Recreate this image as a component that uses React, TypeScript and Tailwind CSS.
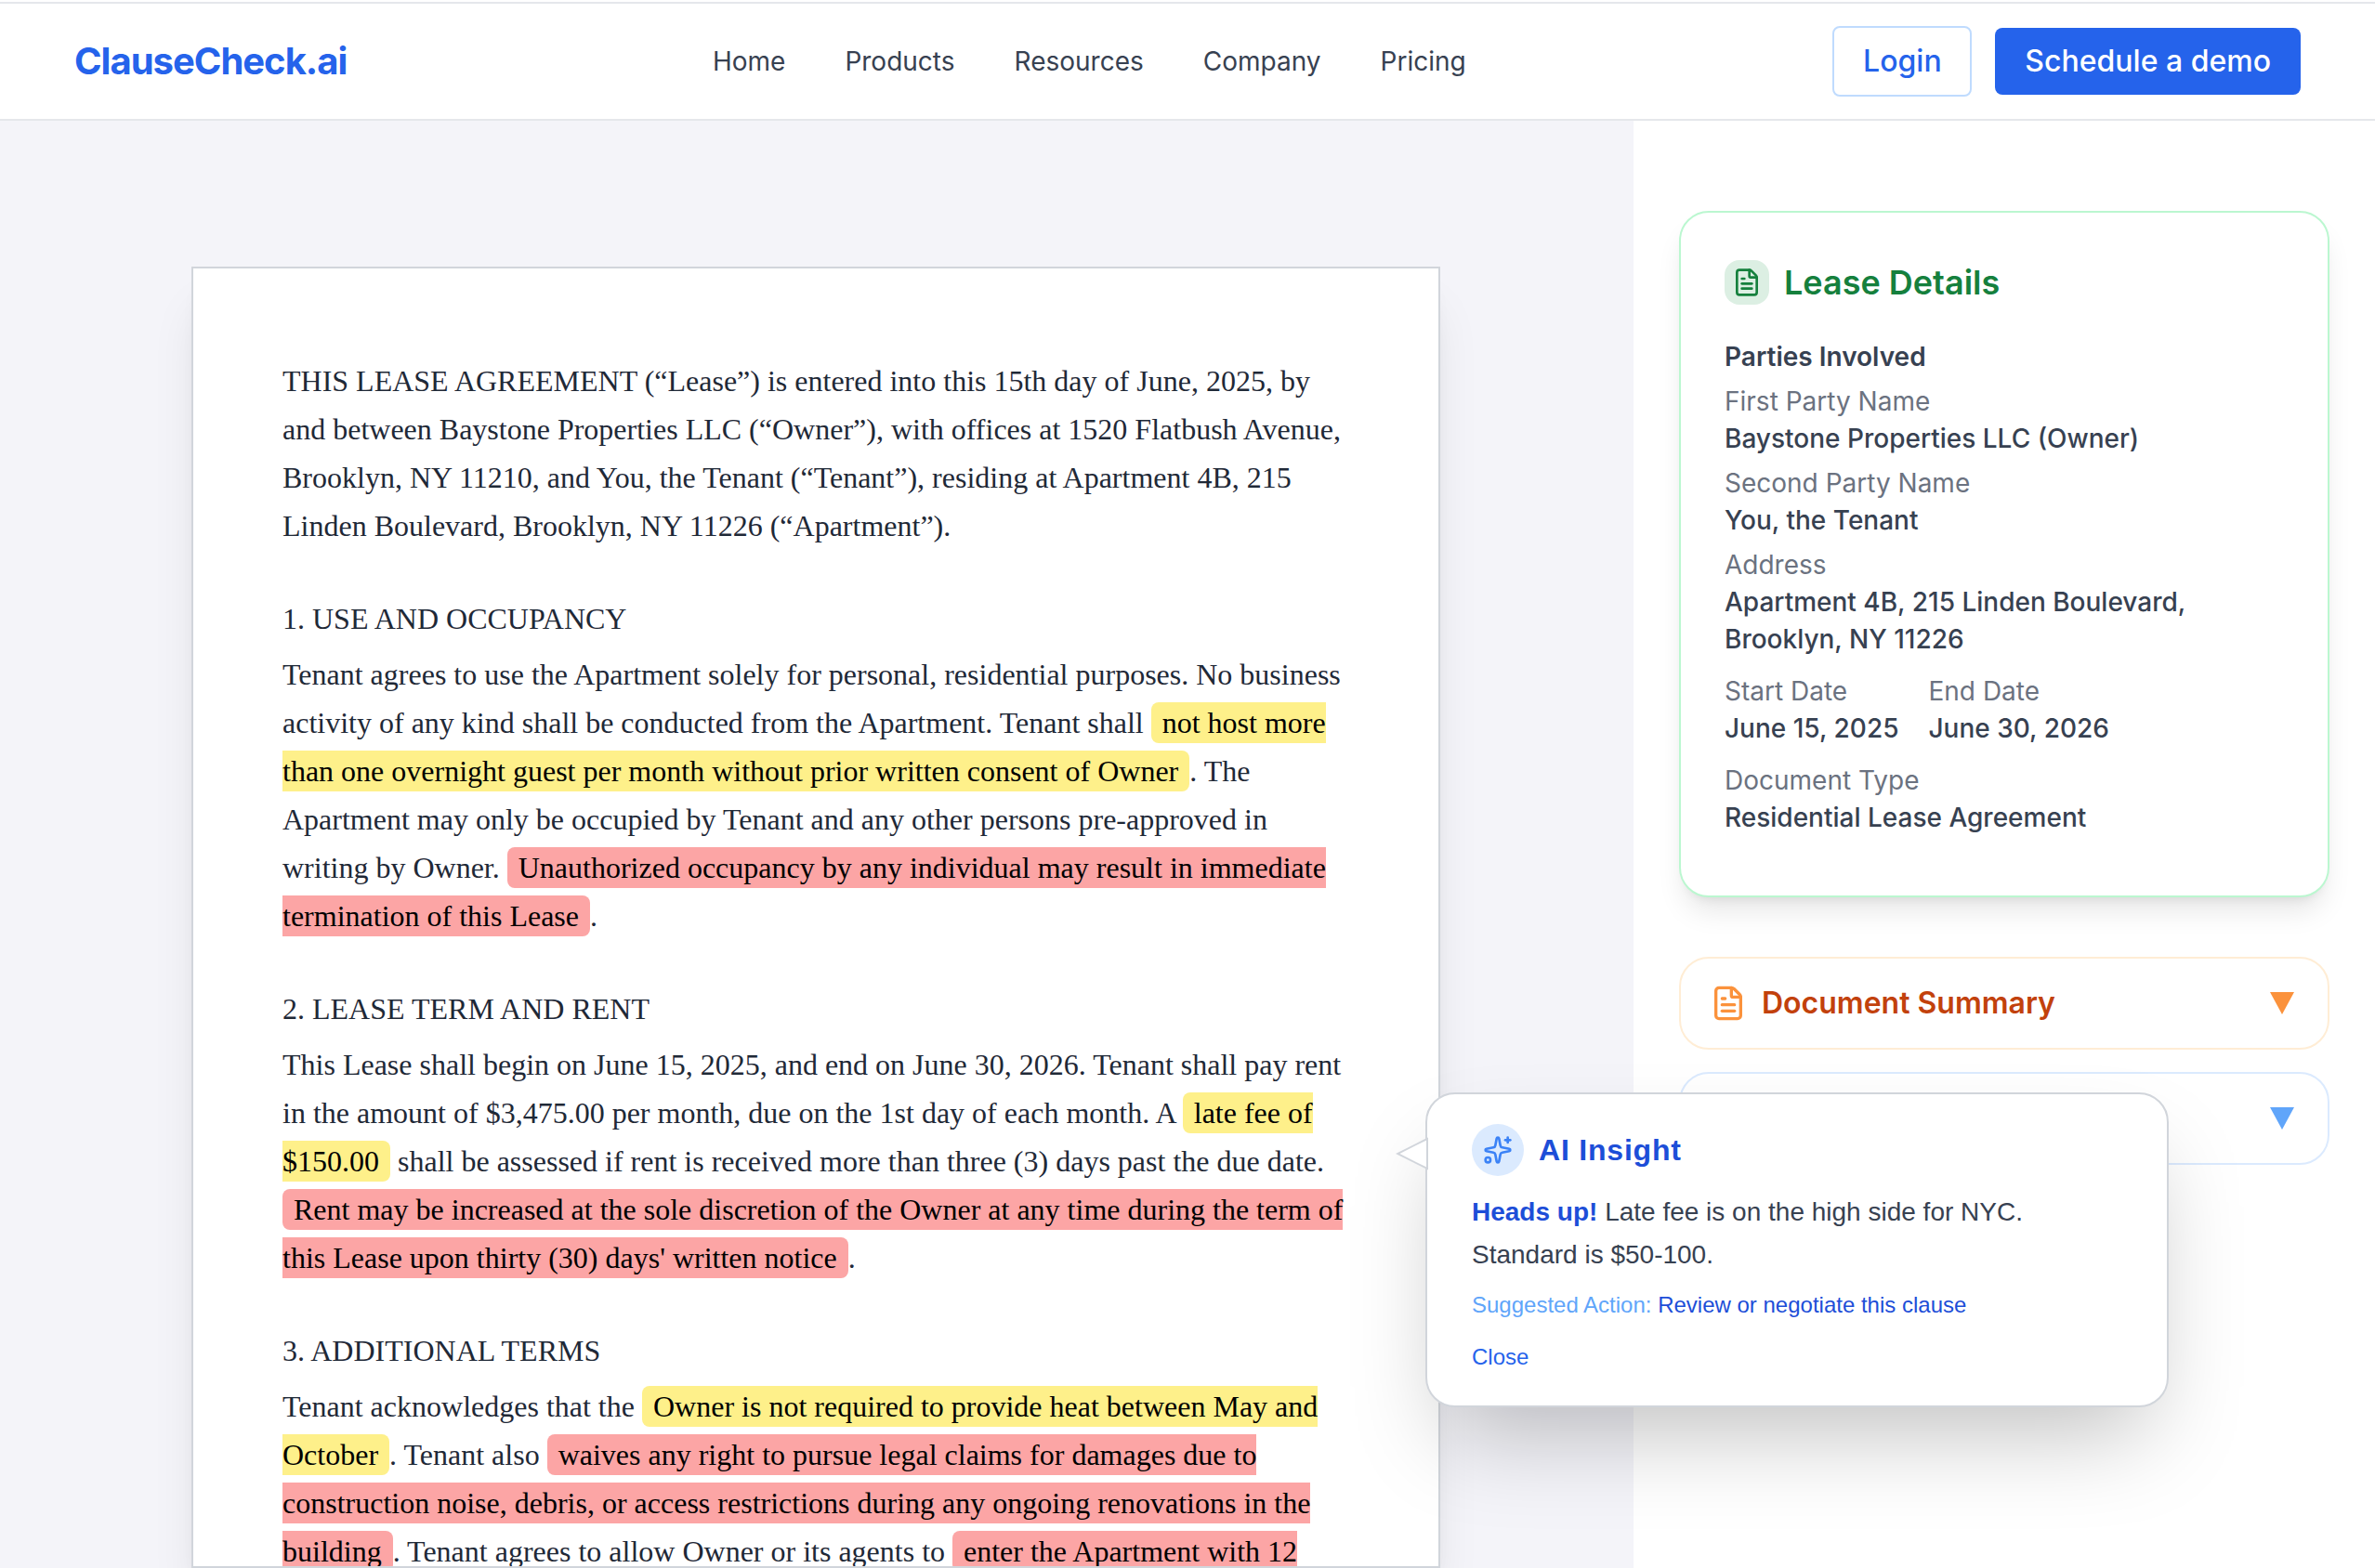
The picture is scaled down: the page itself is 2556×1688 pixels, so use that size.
import React from "react";
import { FileText, Sparkles } from "lucide-react";

const Yellow = ({ children }: { children: React.ReactNode }) => (
  <span className="bg-[#fef08a] text-black px-[12px] py-[4px] rounded-[8px]">{children}</span>
);

const Red = ({ children }: { children: React.ReactNode }) => (
  <span className="bg-[#fca5a5] text-black px-[12px] py-[4px] rounded-[8px]">{children}</span>
);

const Triangle = ({ className }: { className: string }) => (
  <svg width="26" height="24" viewBox="0 0 26 24" className={className}>
    <polygon points="0,0 26,0 13,24" fill="currentColor" />
  </svg>
);

const Field = ({ label, children }: { label: string; children: React.ReactNode }) => (
  <div>
    <div className="text-[#6b7280]">{label}</div>
    <div className="font-medium text-[#374151]">{children}</div>
  </div>
);

const Header = () => {
  const links = ["Home", "Products", "Resources", "Company", "Pricing"];

  return (
    <header className="mt-[2px] h-[128px] shrink-0 border-t-2 border-b-2 border-[#e5e7eb] bg-white pl-[80px] pr-[80px] flex items-center justify-between font-['Inter',sans-serif]">
      <div className="text-[40px] font-bold text-[#2563eb] tracking-[-1px]">ClauseCheck.ai</div>
      <nav className="flex gap-[64px] text-[28px] text-[#374151] ml-[-1px]">
        {links.map((link) => (
          <a key={link}>{link}</a>
        ))}
      </nav>
      <div className="flex items-center gap-[25px] text-[32px] font-medium">
        <button className="h-[76px] w-[150px] rounded-[8px] border-2 border-[#bfdbfe] text-[#2563eb]">Login</button>
        <button className="h-[72px] px-[32px] rounded-[8px] bg-[#2563eb] text-white">Schedule a demo</button>
      </div>
    </header>
  );
};

const LeaseDocument = () => (
  <div className="flex-1 min-w-0 bg-[#f4f4f9] pt-[157px] pr-[2px] flex flex-col items-center">
    <article className="w-[1344px] flex-1 min-h-0 overflow-hidden bg-white border-2 border-[#d1d5db] shadow-[0_40px_50px_-10px_rgba(0,0,0,0.1),0_16px_20px_-12px_rgba(0,0,0,0.1)] pt-[95px] px-[96px] font-['Liberation_Serif',serif] text-[32px] leading-[52px] text-[#1f2937]">
      <p className="mb-[48px]">
        THIS LEASE AGREEMENT (“Lease”) is entered into this 15th day of June, 2025, by and between Baystone Properties
        LLC (“Owner”), with offices at 1520 Flatbush Avenue, Brooklyn, NY 11210, and You, the Tenant (“Tenant”), residing
        at Apartment 4B, 215 Linden Boulevard, Brooklyn, NY 11226 (“Apartment”).
      </p>

      <h2 className="mb-[8px]">1. USE AND OCCUPANCY</h2>
      <p className="mb-[48px]">
        Tenant agrees to use the Apartment solely for personal, residential purposes. No business activity of any kind
        shall be conducted from the Apartment. Tenant shall{" "}
        <Yellow>not host more than one overnight guest per month without prior written consent of Owner</Yellow>. The
        Apartment may only be occupied by Tenant and any other persons pre-approved in writing by Owner.{" "}
        <Red>Unauthorized occupancy by any individual may result in immediate termination of this Lease</Red>.
      </p>

      <h2 className="mb-[8px]">2. LEASE TERM AND RENT</h2>
      <p className="mb-[48px]">
        This Lease shall begin on June 15, 2025, and end on June 30, 2026. Tenant shall pay rent in the amount of
        $3,475.00 per month, due on the 1st day of each month. A <Yellow>late fee of $150.00</Yellow> shall be assessed
        if rent is received more than three (3) days past the due date.{" "}
        <Red>Rent may be increased at the sole discretion of the Owner at any time during the term of this Lease upon thirty (30) days' written notice</Red>.
      </p>

      <h2 className="mb-[8px]">3. ADDITIONAL TERMS</h2>
      <p>
        Tenant acknowledges that the <Yellow>Owner is not required to provide heat between May and October</Yellow>.
        Tenant also{" "}
        <Red>waives any right to pursue legal claims for damages due to construction noise, debris, or access restrictions during any ongoing renovations in the building</Red>
        . Tenant agrees to allow Owner or its agents to{" "}
        {/* clause runs on below the fold, so no right cap here */}
        <span className="bg-[#fca5a5] text-black pl-[12px] py-[4px] rounded-l-[8px]">enter the Apartment with 12</span>
      </p>
    </article>
  </div>
);

const SidePanel = () => (
  <aside className="w-[798px] shrink-0 bg-white pt-[97px] px-[49px] font-['Inter',sans-serif]">
    <section className="rounded-[32px] border-2 border-[#bbf7d0] bg-white shadow-[0_20px_30px_-6px_rgba(0,0,0,0.1),0_8px_12px_-8px_rgba(0,0,0,0.1)] pt-[47px] pb-[64px] px-[47px] text-[28px] leading-[40px]">
      <div className="flex items-center gap-[16px] h-[56px] mb-[32px]">
        <div className="w-[48px] h-[48px] rounded-[16px] bg-[#dcefe3] flex items-center justify-center">
          <FileText size={32} className="text-[#15803d]" />
        </div>
        <h2 className="text-[36px] leading-[56px] font-semibold text-[#15803d]">Lease Details</h2>
      </div>
      <div className="font-semibold text-[#374151] mb-[8px]">Parties Involved</div>
      <div className="flex flex-col gap-[8px]">
        <Field label="First Party Name">Baystone Properties LLC (Owner)</Field>
        <Field label="Second Party Name">You, the Tenant</Field>
        <Field label="Address">
          Apartment 4B, 215 Linden Boulevard,
          <br />
          Brooklyn, NY 11226
        </Field>
      </div>
      <div className="flex gap-[32px] mt-[16px]">
        <Field label="Start Date">June 15, 2025</Field>
        <Field label="End Date">June 30, 2026</Field>
      </div>
      <div className="mt-[16px]">
        <Field label="Document Type">Residential Lease Agreement</Field>
      </div>
    </section>

    <section className="mt-[64px] h-[100px] rounded-[32px] border-2 border-[#ffedd5] bg-white pl-[31px] pr-[36px] flex items-center justify-between">
      <div className="flex items-center gap-[16px]">
        <FileText size={40} className="text-[#fb923c]" />
        <span className="text-[32px] font-semibold text-[#c2410c]">Document Summary</span>
      </div>
      <Triangle className="text-[#fb923c]" />
    </section>

    <section className="mt-[24px] h-[100px] rounded-[32px] border-2 border-[#dbeafe] bg-white pl-[31px] pr-[36px] flex items-center justify-end">
      <Triangle className="text-[#60a5fa]" />
    </section>
  </aside>
);

const InsightPopup = () => (
  <div className="absolute left-[1534px] top-[1046px] w-[800px] rounded-[32px] border-2 border-[#d1d5db] bg-white pt-[32px] pb-[36px] px-[48px] shadow-[0_50px_100px_-24px_rgba(0,0,0,0.25)] font-['Liberation_Sans',sans-serif]">
    <svg width="36" height="36" viewBox="0 0 36 36" className="absolute left-[-34px] top-[46px]">
      <polygon points="34,2 2,18 34,34" fill="white" stroke="#d1d5db" strokeWidth="2" />
    </svg>
    <div className="flex items-center gap-[16px] mb-[16px]">
      <div className="w-[56px] h-[56px] rounded-full bg-[#dbeafe] flex items-center justify-center">
        <Sparkles size={32} className="text-[#3b82f6]" />
      </div>
      <h3 className="text-[32px] font-bold text-[#1d4ed8] tracking-[0.8px]">AI Insight</h3>
    </div>
    <p className="text-[28px] leading-[45.5px] text-[#374151]">
      <b className="font-bold text-[#1d4ed8]">Heads up!</b> Late fee is on the high side for NYC. Standard is $50-100.
    </p>
    <p className="mt-[16px] text-[24px] leading-[32px] text-[#60a5fa]">
      Suggested Action: <span className="text-[#1d4ed8]">Review or negotiate this clause</span>
    </p>
    <button className="block mt-[24px] text-[24px] leading-[32px] text-[#2563eb]">Close</button>
  </div>
);

export default function App() {
  return (
    <div className="w-[2556px] h-[1688px] overflow-hidden flex flex-col bg-white">
      <Header />
      <main className="relative flex-1 min-h-0 flex">
        <LeaseDocument />
        <SidePanel />
        <InsightPopup />
      </main>
    </div>
  );
}
